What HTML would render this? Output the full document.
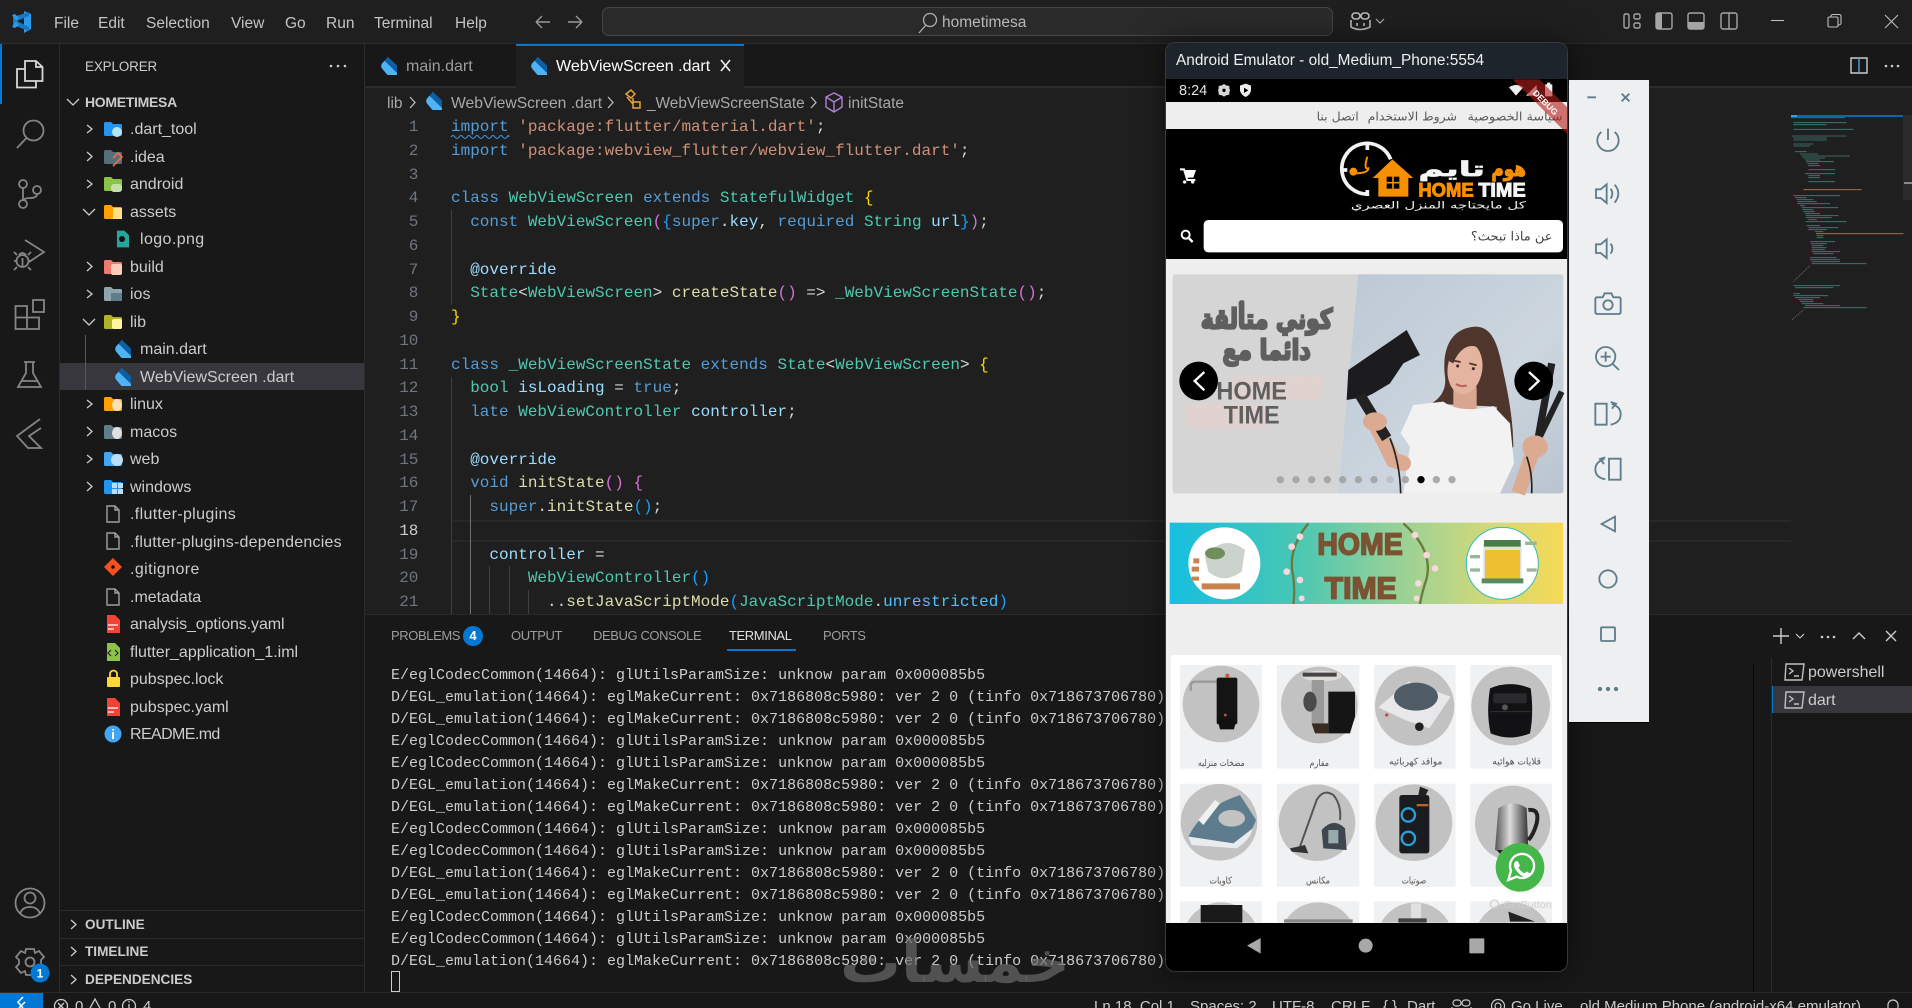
<!DOCTYPE html>
<html lang="en"><head><meta charset="utf-8"><title>hometimesa</title>
<style>
html,body{margin:0;padding:0;width:1912px;height:1008px;overflow:hidden;background:#1f1f1f}
body{position:relative;font-family:"Liberation Sans",sans-serif;color:#ccc}
.b{position:absolute}
.t{position:absolute;white-space:nowrap;height:22px;line-height:22px;font-size:16px}
.m{font-size:15.5px;color:#c4c4c4}
.e{color:#ccc;font-size:16px}
.h{font-weight:bold;font-size:13.6px;color:#ccc}
.p{font-size:13px;color:#9d9d9d;letter-spacing:-.4px}
.code{position:absolute;left:451px;top:116px;width:1340px;height:498px;overflow:hidden;font:16px/23.75px "Liberation Mono",monospace;color:#d4d4d4;white-space:pre}
.ln{position:absolute;left:380px;width:38.4px;top:116px;height:498px;overflow:hidden;font:16px/23.75px "Liberation Mono",monospace;color:#6e7681;text-align:right;white-space:pre}
.term{position:absolute;left:391px;top:665px;font:15px/22px "Liberation Mono",monospace;color:#ccc;white-space:pre}
i{font-style:normal}
.k{color:#569cd6}.c{color:#4ec9b0}.s{color:#ce9178}.f{color:#dcdcaa}.v{color:#9cdcfe}.g{color:#ffd700}.q{color:#da70d6}.u{color:#179fff}
svg{position:absolute;overflow:visible}
svg text{font-family:"DejaVu Sans",sans-serif}
</style></head><body>

<!-- chrome backgrounds -->
<div class="b" style="left:0;top:0;width:1912px;height:43px;background:#1f1f1f;border-bottom:1px solid #2b2b2b"></div>
<div class="b" style="left:0;top:44px;width:60px;height:949px;background:#181818;border-right:1px solid #2b2b2b;box-sizing:border-box"></div>
<div class="b" style="left:60px;top:44px;width:305px;height:949px;background:#181818;border-right:1px solid #2b2b2b;box-sizing:border-box"></div>
<div class="b" style="left:365px;top:44px;width:1547px;height:42px;background:#181818;border-bottom:2px solid #2b2b2b"></div>
<div class="b" style="left:516px;top:44px;width:228px;height:44px;background:#1f1f1f;border-top:2px solid #0078d4;box-sizing:border-box"></div>
<div class="b" style="left:0;top:44px;width:2px;height:60px;background:#0078d4"></div>
<div class="b" style="left:602px;top:7px;width:731px;height:29px;background:#2a2a2a;border:1px solid #454545;border-radius:7px;box-sizing:border-box"></div>
<div class="b" style="left:60px;top:363px;width:304px;height:27px;background:#37373d"></div>
<div class="b" style="left:85px;top:335px;width:1px;height:55px;background:#585858"></div>
<div class="b" style="left:60px;top:910px;width:304px;height:1px;background:#2b2b2b"></div>
<div class="b" style="left:60px;top:938px;width:304px;height:1px;background:#2b2b2b"></div>
<div class="b" style="left:60px;top:965px;width:304px;height:1px;background:#2b2b2b"></div>

<div class="b" style="left:0;top:1px">
<!-- menu -->
<div class="t m" style="left:54px;top:12px">File</div>
<div class="t m" style="left:98px;top:12px">Edit</div>
<div class="t m" style="left:146px;top:12px">Selection</div>
<div class="t m" style="left:231px;top:12px">View</div>
<div class="t m" style="left:285px;top:12px">Go</div>
<div class="t m" style="left:326px;top:12px">Run</div>
<div class="t m" style="left:374px;top:12px">Terminal</div>
<div class="t m" style="left:455px;top:12px">Help</div>
<div class="t" style="left:942px;top:11px;font-size:15.5px;color:#b8b8b8">hometimesa</div>

<!-- explorer text -->
<div class="t" style="left:85px;top:55px;font-size:13.4px;color:#ccc;letter-spacing:-.1px">EXPLORER</div>
<div class="t h" style="left:85px;top:90px;font-size:14px;letter-spacing:-.3px">HOMETIMESA</div>
<div class="t e" style="left:130px;top:118px">.dart_tool</div>
<div class="t e" style="left:130px;top:146px">.idea</div>
<div class="t e" style="left:130px;top:173px">android</div>
<div class="t e" style="left:130px;top:201px">assets</div>
<div class="t e" style="left:140px;top:228px;letter-spacing:.4px">logo.png</div>
<div class="t e" style="left:130px;top:256px">build</div>
<div class="t e" style="left:130px;top:283px">ios</div>
<div class="t e" style="left:130px;top:311px">lib</div>
<div class="t e" style="left:140px;top:338px">main.dart</div>
<div class="t e" style="left:140px;top:366px">WebViewScreen .dart</div>
<div class="t e" style="left:130px;top:393px">linux</div>
<div class="t e" style="left:130px;top:421px">macos</div>
<div class="t e" style="left:130px;top:448px">web</div>
<div class="t e" style="left:130px;top:476px">windows</div>
<div class="t e" style="left:130px;top:503px;letter-spacing:.35px">.flutter-plugins</div>
<div class="t e" style="left:130px;top:531px;letter-spacing:.22px">.flutter-plugins-dependencies</div>
<div class="t e" style="left:130px;top:558px;letter-spacing:.4px">.gitignore</div>
<div class="t e" style="left:130px;top:586px">.metadata</div>
<div class="t e" style="left:130px;top:613px;letter-spacing:-.1px">analysis_options.yaml</div>
<div class="t e" style="left:130px;top:641px">flutter_application_1.iml</div>
<div class="t e" style="left:130px;top:668px">pubspec.lock</div>
<div class="t e" style="left:130px;top:696px">pubspec.yaml</div>
<div class="t e" style="left:130px;top:723px;letter-spacing:-.6px">README.md</div>
<div class="t h" style="left:85px;top:913px">OUTLINE</div>
<div class="t h" style="left:85px;top:940px">TIMELINE</div>
<div class="t h" style="left:85px;top:968px">DEPENDENCIES</div>

<!-- tabs + breadcrumb -->
<div class="t" style="left:406px;top:55px;color:#9d9d9d">main.dart</div>
<div class="t" style="left:556px;top:55px;color:#fff">WebViewScreen .dart</div>
<div class="t" style="left:387px;top:92px;font-size:15.5px;color:#a8a8a8">lib</div>
<div class="t" style="left:451px;top:92px;font-size:15.7px;color:#a8a8a8">WebViewScreen .dart</div>
<div class="t" style="left:647px;top:92px;font-size:15.4px;color:#a8a8a8">_WebViewScreenState</div>
<div class="t" style="left:848px;top:92px;font-size:15.5px;color:#a8a8a8">initState</div>
</div>

<!-- editor -->
<div class="b" style="left:451px;top:520px;width:1340px;height:22px;box-sizing:border-box;border-top:2px solid #282828;border-bottom:2px solid #282828"></div>
<div class="b" style="left:451px;top:210px;width:1px;height:95px;background:#404040"></div>
<div class="b" style="left:451px;top:377px;width:1px;height:237px;background:#404040"></div>
<div class="b" style="left:470px;top:495px;width:1px;height:119px;background:#707070"></div>
<div class="b" style="left:489px;top:566px;width:1px;height:48px;background:#404040"></div>
<div class="b" style="left:509px;top:566px;width:1px;height:48px;background:#404040"></div>
<div class="b" style="left:528px;top:590px;width:1px;height:24px;background:#404040"></div>
<div class="ln">1
2
3
4
5
6
7
8
9
10
11
12
13
14
15
16
17
<i style="color:#ccc">18</i>
19
20
21</div>
<div class="code"><i class="k">import</i> <i class="s">'package:flutter/material.dart'</i>;
<i class="k">import</i> <i class="s">'package:webview_flutter/webview_flutter.dart'</i>;

<i class="k">class</i> <i class="c">WebViewScreen</i> <i class="k">extends</i> <i class="c">StatefulWidget</i> <i class="g">{</i>
  <i class="k">const</i> <i class="c">WebViewScreen</i><i class="q">(</i><i class="u">{</i><i class="k">super</i>.<i class="v">key</i>, <i class="k">required</i> <i class="c">String</i> <i class="v">url</i><i class="u">}</i><i class="q">)</i>;

  <i class="v">@override</i>
  <i class="c">State</i>&lt;<i class="c">WebViewScreen</i>&gt; <i class="f">createState</i><i class="q">()</i> =&gt; <i class="c">_WebViewScreenState</i><i class="q">()</i>;
<i class="g">}</i>

<i class="k">class</i> <i class="c">_WebViewScreenState</i> <i class="k">extends</i> <i class="c">State</i>&lt;<i class="c">WebViewScreen</i>&gt; <i class="g">{</i>
  <i class="c">bool</i> <i class="v">isLoading</i> = <i class="k">true</i>;
  <i class="k">late</i> <i class="c">WebViewController</i> <i class="v">controller</i>;

  <i class="v">@override</i>
  <i class="k">void</i> <i class="f">initState</i><i class="q">()</i> <i class="q">{</i>
    <i class="k">super</i>.<i class="f">initState</i><i class="u">()</i>;

    <i class="v">controller</i> =
        <i class="c">WebViewController</i><i class="u">()</i>
          ..<i class="f">setJavaScriptMode</i><i class="u">(</i><i class="c">JavaScriptMode</i>.<i class="u" style="color:#4fc1ff">unrestricted</i><i class="u">)</i></div>

<!-- panel -->
<div class="b" style="left:365px;top:614px;width:1547px;height:379px;background:#181818;border-top:1px solid #2b2b2b;box-sizing:border-box"></div>
<div class="t p" style="left:391px;top:625px">PROBLEMS</div>
<div class="t p" style="left:511px;top:625px">OUTPUT</div>
<div class="t p" style="left:593px;top:625px">DEBUG CONSOLE</div>
<div class="t p" style="left:729px;top:625px;color:#e0e0e0">TERMINAL</div>
<div class="t p" style="left:823px;top:625px">PORTS</div>
<div class="b" style="left:727px;top:649px;width:69px;height:2px;background:#0078d4"></div>
<div class="b" style="left:463px;top:626px;width:20px;height:20px;border-radius:50%;background:#0078d4;color:#fff;font:bold 13px/20px 'Liberation Sans',sans-serif;text-align:center">4</div>
<div class="term">E/eglCodecCommon(14664): glUtilsParamSize: unknow param 0x000085b5
D/EGL_emulation(14664): eglMakeCurrent: 0x7186808c5980: ver 2 0 (tinfo 0x718673706780)
D/EGL_emulation(14664): eglMakeCurrent: 0x7186808c5980: ver 2 0 (tinfo 0x718673706780)
E/eglCodecCommon(14664): glUtilsParamSize: unknow param 0x000085b5
E/eglCodecCommon(14664): glUtilsParamSize: unknow param 0x000085b5
D/EGL_emulation(14664): eglMakeCurrent: 0x7186808c5980: ver 2 0 (tinfo 0x718673706780)
D/EGL_emulation(14664): eglMakeCurrent: 0x7186808c5980: ver 2 0 (tinfo 0x718673706780)
E/eglCodecCommon(14664): glUtilsParamSize: unknow param 0x000085b5
E/eglCodecCommon(14664): glUtilsParamSize: unknow param 0x000085b5
D/EGL_emulation(14664): eglMakeCurrent: 0x7186808c5980: ver 2 0 (tinfo 0x718673706780)
D/EGL_emulation(14664): eglMakeCurrent: 0x7186808c5980: ver 2 0 (tinfo 0x718673706780)
E/eglCodecCommon(14664): glUtilsParamSize: unknow param 0x000085b5
E/eglCodecCommon(14664): glUtilsParamSize: unknow param 0x000085b5
D/EGL_emulation(14664): eglMakeCurrent: 0x7186808c5980: ver 2 0 (tinfo 0x718673706780)</div>
<div class="b" style="left:391px;top:971px;width:9px;height:21px;border:1px solid #ccc;box-sizing:border-box"></div>
<div class="b" style="left:1753px;top:663px;width:1px;height:330px;background:#050505"></div>
<div class="b" style="left:1771px;top:658px;width:1px;height:335px;background:#2b2b2b"></div>
<div class="b" style="left:1772px;top:686px;width:140px;height:27px;background:#37373d;border-left:1px solid #0078d4;box-sizing:border-box"></div>
<div class="t" style="left:1808px;top:662px;color:#ccc">powershell</div>
<div class="t" style="left:1808px;top:690px;color:#ccc">dart</div>

<!-- minimap -->
<div class="b" style="left:1791px;top:115px;width:112px;height:2px;background:#0a66b0"></div>
<div class="b" style="left:1791px;top:115px;width:6px;height:2px;background:#2aa0f0"></div>
<div class="b" style="left:1903px;top:115px;width:9px;height:85px;background:#2b2b2b"></div>
<div class="b" style="left:1904px;top:182px;width:8px;height:2px;background:#8a8a8a"></div>
<svg style="left:1560px;top:0" width="352" height="400" viewBox="0 0 1056 1200" fill="none" stroke-width="2.6">
<path stroke="#4a9a90" opacity=".8" d="M693 353H855M700 368H860M700 374H800M700 388H880M695 408H860M700 414H800M700 420H800M700 432H760M700 438H750M705 455H740M720 462H775M725 468H870M730 474H795M735 480H780M738 485H822M742 491H775M745 497H780M745 509H825M735 521H825M745 527H780M745 533H780M745 545H825M700 587H840M705 593H740M710 599H760M712 605H770M712 611H810M720 617H735M725 623H835M727 629H760M730 635H765M735 641H780M737 647H835M737 653H815M745 659H770M737 665H860M740 677H780M745 683H835M745 689H800M765 695H790M770 707H790M770 713H790M750 725H825M752 731H800M755 737H790M755 743H800M755 749H795M755 755H840M760 761H820M750 773H830M750 779H840M755 785H840M755 791H920M700 857H840M705 863H820M700 881H720M700 887H805M705 893H780M715 899H760M720 905H760M725 911H790M735 917H840M730 923H920"/>
<path stroke="#b8794f" d="M730 569H905M768 701H1030"/>
<path stroke="#777" stroke-dasharray="3 3" d="M750 797L700 845M730 930L695 960"/>
</svg>

<!-- status bar -->
<div class="b" style="left:0;top:992px;width:1912px;height:16px;background:#181818;border-top:1px solid #2b2b2b;box-sizing:border-box;overflow:hidden"></div>
<div class="b" style="left:0;top:993px;width:43px;height:15px;background:#0078d4"></div>
<div class="t" style="left:75px;top:996px;font-size:15px">0</div>
<div class="t" style="left:108px;top:996px;font-size:15px">0</div>
<div class="t" style="left:143px;top:996px;font-size:15px">4</div>
<div class="t" style="left:1094px;top:996px;font-size:15px">Ln 18, Col 1</div>
<div class="t" style="left:1190px;top:996px;font-size:15px">Spaces: 2</div>
<div class="t" style="left:1272px;top:996px;font-size:15px">UTF-8</div>
<div class="t" style="left:1331px;top:996px;font-size:15px">CRLF</div>
<div class="t" style="left:1383px;top:996px;font-size:15px">{ }</div>
<div class="t" style="left:1407px;top:996px;font-size:15px">Dart</div>
<div class="t" style="left:1511px;top:996px;font-size:15px">Go Live</div>
<div class="t" style="left:1580px;top:996px;font-size:15px">old Medium Phone (android-x64 emulator)</div>

<!-- watermark -->
<svg style="left:0;top:0" width="1912" height="1008"><text x="955" y="982" text-anchor="middle" font-size="58" font-weight="bold" fill="#6a6a6a" fill-opacity=".7" textLength="230" lengthAdjust="spacingAndGlyphs">خمسات</text></svg>

<!-- vscode icons -->
<svg style="left:0;top:0" width="1912" height="1008" fill="none">
<defs>
<symbol id="dart" viewBox="0 0 17 18"><path fill="#4fb3f6" d="M7 0L1 6.5Q-.6 9 1 11.5L6.5 18H16V12Z"/><path fill="#0d5fa3" d="M7 0L16 8.5V16L3.5 3.7Z"/></symbol>
<symbol id="fo" viewBox="0 0 18 14"><path fill="currentColor" d="M0 1.5A1.5 1.5 0 0 1 1.5 0H7l2 2h7.5A1.5 1.5 0 0 1 18 3.5V12.5A1.5 1.5 0 0 1 16.5 14H1.5A1.5 1.5 0 0 1 0 12.5Z"/></symbol>
<symbol id="fl" viewBox="0 0 14 18"><path stroke="#a0a0a0" stroke-width="1.4" fill="none" d="M1 1H9L13 5V17H1ZM9 1V5H13"/></symbol>
<symbol id="ff" viewBox="0 0 14 18"><path fill="currentColor" d="M1 0H9L14 5V18H1Z"/></symbol>
</defs>
<!-- vscode logo -->
<path fill="#2a9be8" d="M24 11L31 14V29L24 33Z"/><path fill="#1a78c2" d="M13 17L29 12V16L17 21L29 27V31L13 25Z"/><path fill="#2a9be8" d="M12 15L15 14L19 18L16 21L19 25L15 28L12 27L16 21Z"/>
<!-- nav arrows -->
<g stroke="#9a9a9a" stroke-width="1.4"><path d="M536 22H550M536 22L542 16M536 22L542 28"/><path d="M582 22H568M582 22L576 16M582 22L576 28"/></g>
<circle cx="930" cy="20" r="6.5" stroke="#b0b0b0" stroke-width="1.3"/><path d="M926 25L919 33" stroke="#b0b0b0" stroke-width="1.3"/>
<!-- copilot -->
<g stroke="#bbb" stroke-width="1.6"><rect x="1352" y="13" width="8" height="6" rx="3"/><rect x="1361" y="13" width="8" height="6" rx="3"/><path d="M1351 20V27Q1360 32 1370 27V20"/><path d="M1357 23V26M1364 23V26"/></g>
<path d="M1376 19L1380 23L1384 19" stroke="#aaa" stroke-width="1.2"/>
<!-- layout icons -->
<g stroke="#a5a5a5" stroke-width="1.4"><rect x="1624" y="14" width="5" height="14" rx="1.5"/><rect x="1634" y="14" width="6" height="5" rx="1.5"/><rect x="1634" y="23" width="6" height="5" rx="1.5"/><rect x="1656" y="13" width="16" height="16" rx="2"/><rect x="1688" y="13" width="16" height="16" rx="2"/><rect x="1721" y="13" width="16" height="16" rx="2"/><path d="M1729 13V29"/></g>
<path fill="#a5a5a5" d="M1656 15Q1656 13 1658 13H1662V29H1658Q1656 29 1656 27Z"/><path fill="#a5a5a5" d="M1688 22H1704V27Q1704 29 1702 29H1690Q1688 29 1688 27Z"/>
<g stroke="#bdbdbd" stroke-width="1.1"><path d="M1771 20.5H1784"/><rect x="1828" y="17" width="10" height="10" rx="1.5"/><path d="M1831 17V16Q1831 14.500 1833 14.500H1839Q1841 14.500 1841 16V23Q1841 25 1838 25"/><path d="M1885 15L1898 28M1898 15L1885 28"/></g>
<!-- tab icons -->
<use href="#dart" x="381" y="57" width="17" height="18"/><use href="#dart" x="531" y="57" width="17" height="18"/><use href="#dart" x="426" y="92" width="17" height="18"/>
<path d="M721 60L730 71M730 60L721 71" stroke="#eee" stroke-width="1.6"/>
<g stroke="#bbb" stroke-width="1.3"><path d="M410 97L415 102.500L410 108M608 97L613 102.500L608 108M811 97L816 102.500L811 108"/></g>
<g stroke="#e8a33b" stroke-width="1.5"><path d="M626 94L631 90L635 94L631 98ZM633 102H640V108H633ZM633 98V105M627 97L633 104"/></g>
<g stroke="#b180d7" stroke-width="1.4"><path d="M834 93L842 97V107L834 112L826 107V97ZM826 97L834 102L842 97M834 102V112"/></g>
<path d="M1851 58H1867V73H1851Z" stroke="#ccc" stroke-width="1.4"/><path d="M1859 58V73" stroke="#4fa6e0" stroke-width="1.4"/>
<g fill="#ccc"><circle cx="1886" cy="66" r="1.3"/><circle cx="1892" cy="66" r="1.3"/><circle cx="1898" cy="66" r="1.3"/><circle cx="331" cy="66" r="1.3"/><circle cx="338" cy="66" r="1.3"/><circle cx="345" cy="66" r="1.3"/></g>
<!-- squiggle -->
<path d="M451 137q2 -3 4 0t4 0t4 0t4 0t4 0t4 0t4 0t4 0t4 0t4 0t4 0t4 0t4 0t4 0t2 0" stroke="#3f9ae8" stroke-width="1"/>
<!-- activity bar -->
<g stroke="#d7d7d7" stroke-width="1.8"><path d="M25 61H36L42.500 67V81H25ZM36 61V67H42.500"/><path d="M25 69H17V87.500H36V81"/></g>
<g stroke="#858585" stroke-width="1.8">
<circle cx="33.500" cy="130.500" r="10"/><path d="M26.500 138L17 148"/>
<circle cx="23" cy="184" r="4"/><circle cx="23" cy="204" r="4"/><circle cx="37" cy="190" r="4"/><path d="M23 188V200M37 194Q37 198 30 198Q24 198 23 201"/>
<path d="M25 240L44 252L29 262"/><circle cx="22.500" cy="261" r="6"/><path d="M16 261H14M29 261H31M17 255L14 252M28 255L31 252M17 267L14 270M28 267L31 270M19 255Q22 251 26 255M22.500 258V266"/>
<path d="M15.500 306H27V329H15.500ZM15.500 317.500H39V329H27M33 300H44V312H33Z"/>
<path d="M24 362H35M26 362V373L18 387H41L33 373V362M21 381H38"/>
<path d="M40 419L17 436L28 448H41L29 436L41 428" />
<circle cx="30" cy="903" r="14.500"/><circle cx="30" cy="898" r="5.500"/><path d="M20 914Q22 907 30 907Q38 907 40 914"/>
<circle cx="30" cy="962" r="4.500"/><path d="M26 949H34L35 953L39 951L44 957L41 960V964L44 967L39 973L35 971L34 975H26L25 971L21 973L16 967L19 964V960L16 957L21 951L25 953Z"/>
</g>
<circle cx="40" cy="973" r="9.500" fill="#0078d4"/><text x="40" y="977.500" text-anchor="middle" font-size="12" font-weight="bold" fill="#fff" style="font-family:'Liberation Sans',sans-serif">1</text>
<!-- explorer chevrons -->
<g stroke="#ccc" stroke-width="1.3">
<path d="M87 125L92 129L87 133M87 152L92 156.500L87 161M87 180L92 184L87 188M87 262L92 266.500L87 271M87 290L92 294L87 298M87 400L92 404L87 408M87 427L92 431.500L87 436M87 455L92 459L87 463M87 482L92 486.500L87 491"/>
<path d="M83 209L89 215L95 209M83 319L89 325L95 319M67 99L73 105L79 99"/>
<path d="M71 920L76 924.500L71 929M71 947L76 951.500L71 956M71 975L76 979.500L71 984"/>
</g>
<!-- folders -->
<use href="#fo" x="104" y="122" width="18" height="14" color="#2196f3"/><circle cx="117" cy="132" r="5" fill="#b3e5fc"/>
<use href="#fo" x="104" y="150" width="18" height="14" color="#546e7a"/><path d="M113 158L118 153L122 157L113 166" stroke="#ef6c4a" stroke-width="1.6"/>
<use href="#fo" x="104" y="177" width="18" height="14" color="#8bc34a"/><rect x="111" y="184" width="11" height="8" rx="3" fill="#c5e1a5"/>
<use href="#fo" x="104" y="205" width="18" height="14" color="#ffa000"/><rect x="113" y="208" width="9" height="11" fill="#ffe082"/>
<use href="#ff" x="116" y="230" width="13" height="18" color="#26a69a"/><circle cx="122" cy="239" r="3" fill="#111"/>
<use href="#fo" x="104" y="260" width="18" height="14" color="#ef7b6f"/><rect x="111" y="264" width="11" height="11" rx="2" fill="#ffccbc"/>
<use href="#fo" x="104" y="287" width="18" height="14" color="#90a4ae"/><rect x="111" y="293" width="11" height="8" fill="#607d8b"/>
<use href="#fo" x="104" y="315" width="18" height="14" color="#afb42b"/><rect x="112" y="319" width="10" height="10" rx="2" fill="#fff59d"/>
<use href="#fo" x="104" y="397" width="18" height="14" color="#ffa000"/><ellipse cx="117" cy="405" rx="5" ry="6" fill="#ffe0b2"/>
<use href="#fo" x="104" y="425" width="18" height="14" color="#607d8b"/><ellipse cx="117" cy="433" rx="5" ry="6" fill="#e0e0e0"/>
<use href="#fo" x="104" y="452" width="18" height="14" color="#42a5f5"/><circle cx="117" cy="460" r="6" fill="#bbdefb"/>
<use href="#fo" x="104" y="480" width="18" height="14" color="#2196f3"/><path fill="#bbdefb" d="M112 483H117V488H112ZM118 483H123V488H118ZM112 489H117V494H112ZM118 489H123V494H118Z"/>
<use href="#dart" x="115" y="340" width="17" height="18"/><use href="#dart" x="115" y="368" width="17" height="18"/>
<use href="#fl" x="106" y="505" width="14" height="18"/><use href="#fl" x="106" y="532" width="14" height="18"/><use href="#fl" x="106" y="588" width="14" height="18"/>
<path fill="#f4511e" d="M113 558L122 567L113 576L104 567Z"/><circle cx="113" cy="567" r="1.700" fill="#111"/>
<use href="#ff" x="106" y="615" width="14" height="18" color="#f44336"/><path d="M108 625H118M108 629H114" stroke="#fff" stroke-width="1.300"/>
<use href="#ff" x="106" y="643" width="14" height="18" color="#8bc34a"/><path d="M111 650L108 653L111 656M115 650L118 653L115 656" stroke="#222" stroke-width="1.200"/>
<rect x="107" y="677" width="13" height="10" rx="1" fill="#fdd835"/><path d="M110 677V674A3.500 3.500 0 0 1 117 674V677" stroke="#fdd835" stroke-width="1.800"/>
<use href="#ff" x="106" y="698" width="14" height="18" color="#f44336"/><path d="M108 708H118M108 712H114" stroke="#fff" stroke-width="1.300"/>
<circle cx="113" cy="734" r="8.500" fill="#42a5f5"/><path d="M113 732V739M113 729V730.500" stroke="#fff" stroke-width="2"/>
<!-- panel right -->
<g stroke="#ccc" stroke-width="1.4"><path d="M1781 628V644M1773 636H1789"/><path d="M1796 634L1800 638L1804 634" stroke-width="1.100"/><path d="M1853 639L1859 633L1865 639"/><path d="M1886 631L1896 641M1896 631L1886 641"/></g>
<g fill="#ccc"><circle cx="1822" cy="637" r="1.300"/><circle cx="1828" cy="637" r="1.300"/><circle cx="1834" cy="637" r="1.300"/></g>
<g stroke="#c0c0c0" stroke-width="1.400"><path d="M1786 664H1804L1802 680H1785ZM1789 668L1793 671L1789 674M1794 676H1799"/><path d="M1786 692H1804L1802 708H1785ZM1789 696L1793 699L1789 702M1794 704H1799"/></g>
<!-- status icons -->
<path d="M16 1003L22 998M22 1003L16 998M20 1006L26 1001M26 1006L20 1001" stroke="#fff" stroke-width="1.500" opacity="0"/>
<path d="M21 1008L26 1002L21 997" stroke="#fff" stroke-width="1.500" transform="matrix(-1 0 0 1 44 0)"/><path d="M19 1008L25 1002" stroke="#fff" stroke-width="1.500"/>
<g stroke="#ccc" stroke-width="1.300"><circle cx="61" cy="1006" r="6.500"/><path d="M58 1003L64 1009M64 1003L58 1009"/><path d="M95 999L102 1012H88Z"/><circle cx="129" cy="1006" r="6.500"/><path d="M129 1004V1010M129 1001V1002.500"/></g>
<g stroke="#ccc" stroke-width="1.200"><rect x="1453" y="1000" width="8" height="6" rx="3"/><rect x="1462" y="1000" width="8" height="6" rx="3"/><path d="M1452 1007V1012M1471 1007V1012"/><circle cx="1498" cy="1006" r="6.500"/><circle cx="1498" cy="1006" r="3"/><path d="M1888 1012V1005A5 5 0 0 1 1898 1005V1012"/></g>
</svg>

<!-- emulator window -->
<div class="b" style="left:1165px;top:42px;width:403px;height:930px;background:#000;border:1px solid #3a3a3a;border-radius:10px;box-sizing:border-box;box-shadow:0 0 30px rgba(0,0,0,.55);overflow:hidden">
 <div class="b" style="left:0;top:0;width:401px;height:36px;background:#1d242c"></div>
 <div class="b" style="left:0;top:59px;width:401px;height:27px;background:#eeeeee"></div>
 <div class="b" style="left:0;top:216px;width:401px;height:664px;background:#eeeeee"></div>
</div>
<div class="t" style="left:1176px;top:50px;font-size:15.4px;color:#efefef">Android Emulator - old_Medium_Phone:5554</div>
<div class="t" style="left:1179px;top:80px;font-size:14.5px;color:#e2e2e2">8:24</div>
<!-- toolbar -->
<div class="b" style="left:1569px;top:80px;width:80px;height:643px;background:#eeeff0;border-bottom:1px solid #000;box-sizing:border-box"></div>

<!-- phone upper (zoom coordinates 3x) -->
<svg style="left:1160px;top:30px" width="500" height="470" viewBox="0 0 1500 1410" fill="none">
<defs>
<linearGradient id="gb" x1="0" y1="0" x2="1" y2="1"><stop offset="0" stop-color="#bcc8d4"/><stop offset=".6" stop-color="#cdd6df"/><stop offset="1" stop-color="#b9c4cf"/></linearGradient>
</defs>
<!-- status icons -->
<path fill="#eee" d="M192 162L198 166L208 168V175L210 181L208 187V194L198 196L192 200L186 196L176 194V187L174 181L176 175V168L186 166Z" opacity=".9"/><circle cx="192" cy="181" r="5" fill="#000"/>
<path fill="#eee" d="M240 167L257 161L273 167V182Q270 195 257 201Q243 195 240 182Z"/><path fill="#000" d="M252 173L265 181L252 189Z"/>
<path fill="#eee" d="M1047 172Q1068 158 1090 172L1068 197Z"/><path fill="#eee" d="M1098 197L1130 165V197Z"/><rect x="1155" y="163" width="22" height="36" rx="2" fill="#eee"/><rect x="1161" y="158" width="10" height="6" fill="#eee"/>
<!-- menu row -->
<text x="1065" y="272" text-anchor="middle" font-size="36" fill="#5a5a5a" textLength="285" lengthAdjust="spacingAndGlyphs">سياسة الخصوصية</text>
<text x="757" y="272" text-anchor="middle" font-size="36" fill="#5a5a5a" textLength="268" lengthAdjust="spacingAndGlyphs">شروط الاستخدام</text>
<text x="533" y="272" text-anchor="middle" font-size="36" fill="#5a5a5a" textLength="126" lengthAdjust="spacingAndGlyphs">اتصل بنا</text>
<!-- logo -->
<g stroke="#f2f2f2" stroke-width="11"><path d="M625 492A76 76 0 1 1 692 388"/><path d="M622 345V360M548 420H562M622 480V498"/></g>
<path d="M622 380Q610 420 625 415Q625 428 590 430" stroke="#f79000" stroke-width="6"/><circle cx="580" cy="425" r="12" fill="#f79000"/>
<path fill="#f79000" d="M697 388L760 444H745V500H655V444H638Z"/><path fill="#000" d="M680 440H718V476H680Z"/><path d="M699 440V476M680 458H718" stroke="#f79000" stroke-width="5"/>
<text x="1046" y="438" text-anchor="middle" font-size="62" font-weight="bold" fill="#f79000" stroke="#f79000" stroke-width="3" textLength="104" lengthAdjust="spacingAndGlyphs">هوم</text>
<text x="875" y="438" text-anchor="middle" font-size="62" font-weight="bold" fill="#f4f4f4" stroke="#f4f4f4" stroke-width="2" textLength="200" lengthAdjust="spacingAndGlyphs">تايم</text>
<text x="775" y="500" font-size="58" font-weight="bold" fill="#f79000" stroke="#f79000" stroke-width="3" textLength="166" lengthAdjust="spacingAndGlyphs" style="font-family:'Liberation Sans',sans-serif">HOME</text>
<text x="955" y="500" font-size="58" font-weight="bold" fill="#f4f4f4" stroke="#f4f4f4" stroke-width="3" textLength="142" lengthAdjust="spacingAndGlyphs" style="font-family:'Liberation Sans',sans-serif">TIME</text>
<text x="835" y="536" text-anchor="middle" font-size="30" fill="#eee" textLength="525" lengthAdjust="spacingAndGlyphs">كل مايحتاجه المنزل العصري</text>
<!-- cart -->
<path d="M60 418H72L82 450H106" stroke="#fff" stroke-width="6"/><path fill="#fff" d="M72 420H108L100 443H80Z"/><circle cx="74" cy="456" r="5" fill="#fff"/><circle cx="98" cy="456" r="5" fill="#fff"/>
<!-- search -->
<circle cx="77" cy="614" r="12" stroke="#fff" stroke-width="6"/><path d="M86 624L98 636" stroke="#fff" stroke-width="7"/>
<rect x="131" y="570" width="1078" height="97" rx="14" fill="#fff"/>
<text x="1055" y="632" text-anchor="middle" font-size="38" fill="#444" textLength="245" lengthAdjust="spacingAndGlyphs">عن ماذا تبحث؟</text>
<!-- carousel -->
<rect x="38" y="733" width="1172" height="657" rx="8" fill="#d5d5d5"/>
<path fill="url(#gb)" d="M595 733H1202Q1210 733 1210 741V1382Q1210 1390 1202 1390H535Z"/>
<path fill="#e0d3cf" d="M215 1040L498 1038L480 1110L215 1110ZM75 1120L320 1122L320 1195L80 1195Z"/>
<text x="320" y="895" text-anchor="middle" font-size="82" font-weight="bold" fill="#5f5f5f" stroke="#5f5f5f" stroke-width="7" textLength="395" lengthAdjust="spacingAndGlyphs">كوني متألقة</text>
<text x="320" y="988" text-anchor="middle" font-size="82" font-weight="bold" fill="#5f5f5f" stroke="#5f5f5f" stroke-width="7" textLength="265" lengthAdjust="spacingAndGlyphs">دائما مع</text>
<text x="275" y="1108" text-anchor="middle" font-size="74" font-weight="bold" fill="#5f5f5f" textLength="212" lengthAdjust="spacingAndGlyphs" style="font-family:'Liberation Sans',sans-serif">HOME</text>
<text x="275" y="1181" text-anchor="middle" font-size="74" font-weight="bold" fill="#5f5f5f" textLength="168" lengthAdjust="spacingAndGlyphs" style="font-family:'Liberation Sans',sans-serif">TIME</text>
<!-- woman -->
<path fill="#4e362d" d="M945 890C870 895 845 960 855 1040C860 1080 840 1105 815 1120L900 1125L1010 1130L1020 1300L1060 1250C1060 1150 1035 1050 1020 980C1005 920 985 890 945 890Z"/>
<path fill="#d8a58f" d="M880 1070H950V1140H880Z"/>
<ellipse cx="915" cy="1015" rx="52" ry="78" fill="#e4b4a0" transform="rotate(8 915 1015)"/>
<path fill="#4e362d" d="M950 895C900 900 870 930 860 990L880 1000C900 950 935 935 965 960Z"/>
<path fill="#4e362d" d="M965 950L1000 1010L990 1130L1030 1130L1020 980Z"/>
<path d="M882 992L902 996M928 1000L950 1006" stroke="#4a3026" stroke-width="5"/><circle cx="893" cy="1008" r="4.500" fill="#3a2a22"/><circle cx="940" cy="1016" r="4.500" fill="#3a2a22"/><path d="M888 1062Q905 1072 920 1066" stroke="#b8615a" stroke-width="6"/>
<path fill="#f2f2f2" d="M760 1125L850 1115C890 1145 950 1140 1000 1128L1050 1180L1062 1300L1020 1390H730L750 1250L722 1210Z"/>
<path d="M640 1170L700 1290L730 1300" stroke="#dcaa90" stroke-width="46" stroke-linecap="round"/>
<path d="M1120 1260L1075 1390" stroke="#dcaa90" stroke-width="42"/>
<path fill="#1c1c1e" d="M565 1020L740 900L780 975L730 1000L690 1060L640 1090L620 1100L560 1110Z"/>
<path d="M600 1095L680 1225" stroke="#222" stroke-width="32"/>
<path d="M690 1225Q720 1300 722 1390" stroke="#222" stroke-width="5"/>
<ellipse cx="645" cy="1175" rx="36" ry="28" fill="#dcaa90"/>
<path d="M1175 1000L1130 1250" stroke="#222" stroke-width="22"/><path d="M1205 1085L1130 1240" stroke="#222" stroke-width="18"/>
<ellipse cx="1125" cy="1250" rx="38" ry="34" fill="#dcaa90"/>
<path d="M1100 1280Q1118 1330 1115 1390" stroke="#222" stroke-width="5"/>
<!-- dots -->
<g fill="#a2a2a2" fill-opacity=".9"><circle cx="361" cy="1349" r="11"/><circle cx="408" cy="1349" r="11"/><circle cx="455" cy="1349" r="11"/><circle cx="502" cy="1349" r="11"/><circle cx="548" cy="1349" r="11"/><circle cx="595" cy="1349" r="11"/><circle cx="642" cy="1349" r="11"/><circle cx="690" cy="1349" r="11" fill-opacity=".4"/><circle cx="736" cy="1349" r="11"/><circle cx="829" cy="1349" r="11"/><circle cx="876" cy="1349" r="11"/></g>
<circle cx="783" cy="1349" r="11" fill="#000"/>
<circle cx="116" cy="1053" r="58" fill="#000"/><circle cx="1121" cy="1053" r="58" fill="#000"/>
<path d="M133 1026L104 1053L133 1081M1107 1026L1136 1053L1107 1081" stroke="#fff" stroke-width="7"/>
<!-- debug ribbon -->
<path fill="rgba(183,28,28,.6)" d="M1058 148H1138L1222 232V312Z"/>
<text x="1150" y="224" text-anchor="middle" font-size="26" font-weight="bold" fill="#fff" transform="rotate(45 1150 224)" style="font-family:'Liberation Sans',sans-serif">DEBUG</text>
<!-- toolbar icons -->
<g stroke="#5f7d8c" stroke-width="5.500">
<path d="M1282 202H1308M1385 191L1408 214M1408 191L1385 214"/>
<path d="M1324 306A32 32 0 1 0 1364 306M1344 296V330"/>
<path d="M1308 478H1322L1340 463V519L1322 504H1308ZM1352 476Q1362 490 1352 506M1364 464Q1386 490 1364 518"/>
<path d="M1308 643H1322L1340 628V684L1322 669H1308ZM1352 641Q1362 655 1352 671"/>
<path d="M1306 808Q1306 802 1312 802H1328L1334 790H1354L1360 802H1376Q1382 802 1382 808V846Q1382 852 1376 852H1312Q1306 852 1306 846Z"/><circle cx="1344" cy="825" r="14"/>
<circle cx="1337" cy="980" r="29"/><path d="M1357 1001L1377 1020M1337 965V995M1322 980H1352"/>
<path d="M1306 1121H1340V1184H1306ZM1355 1122Q1382 1130 1382 1152Q1382 1178 1352 1184M1352 1116L1368 1121L1356 1136"/>
<path d="M1347 1286H1382V1349H1347ZM1333 1287Q1306 1296 1306 1318Q1306 1342 1336 1348M1336 1282L1320 1287L1332 1302"/>
</g>
</svg>

<!-- phone lower -->
<svg style="left:1160px;top:500px" width="500" height="508" viewBox="0 0 1500 1524" fill="none">
<defs>
<linearGradient id="bn"><stop offset="0" stop-color="#17bfe0"/><stop offset=".3" stop-color="#44c6b6"/><stop offset=".55" stop-color="#8fd09a"/><stop offset=".8" stop-color="#cfd87c"/><stop offset="1" stop-color="#f6d955"/></linearGradient>
<linearGradient id="ke"><stop offset="0" stop-color="#555"/><stop offset=".45" stop-color="#ddd"/><stop offset="1" stop-color="#333"/></linearGradient>
<clipPath id="cr"><rect x="0" y="0" width="1500" height="1268"/></clipPath>
</defs>
<rect x="29" y="68" width="1180" height="244" fill="url(#bn)"/>
<circle cx="193" cy="190" r="108" fill="#fff"/><circle cx="1027" cy="190" r="108" fill="#fff" stroke="#3bb" stroke-width="3"/>
<path d="M135 170Q190 100 255 150L245 215Q190 255 145 215Z" fill="#ccd3cc"/><ellipse cx="165" cy="160" rx="30" ry="18" fill="#6f8f5a"/>
<path d="M100 175h18v15h-18zM95 200h22v15h-22zM95 230h22v12h-22zM125 250h115v18h-115z" fill="#c9824c"/>
<path d="M970 130H1085V245H970Z" fill="#dfe4dd"/><path d="M972 120H1082V140H972Z" fill="#4b7a4b"/><path d="M975 150H1080V235H975Z" fill="#eec030"/><path d="M965 235H1090V250H965Z" fill="#5a8a5a"/>
<path d="M930 170h30M930 210h30M1095 130h35M1100 210h30" stroke="#9bb59b" stroke-width="10"/>
<path d="M445 70Q380 150 400 230Q405 280 400 312M730 70Q820 150 800 235Q785 280 780 312" stroke="#6a7b3f" stroke-width="7"/>
<g fill="#fbd6da"><circle cx="420" cy="110" r="10"/><circle cx="395" cy="140" r="10"/><circle cx="380" cy="215" r="10"/><circle cx="420" cy="240" r="10"/><circle cx="425" cy="295" r="9"/><circle cx="765" cy="105" r="10"/><circle cx="800" cy="165" r="10"/><circle cx="825" cy="205" r="10"/><circle cx="775" cy="250" r="10"/><circle cx="770" cy="295" r="9"/></g>
<text x="600" y="163" text-anchor="middle" font-size="92" font-weight="bold" fill="#7b5232" stroke="#7b5232" stroke-width="5" textLength="256" lengthAdjust="spacingAndGlyphs" style="font-family:'Liberation Sans',sans-serif">HOME</text>
<text x="602" y="296" text-anchor="middle" font-size="92" font-weight="bold" fill="#7b5232" stroke="#7b5232" stroke-width="5" textLength="216" lengthAdjust="spacingAndGlyphs" style="font-family:'Liberation Sans',sans-serif">TIME</text>
<!-- card -->
<g clip-path="url(#cr)">
<rect x="32" y="465" width="1174" height="810" rx="10" fill="#fff"/>
<g fill="#f0f1f3"><rect x="60" y="495" width="246" height="311"/><rect x="351" y="495" width="247" height="311"/><rect x="642" y="495" width="245" height="311"/><rect x="931" y="495" width="245" height="311"/><rect x="60" y="851" width="246" height="309"/><rect x="351" y="851" width="247" height="309"/><rect x="642" y="851" width="245" height="309"/><rect x="931" y="851" width="245" height="309"/><rect x="60" y="1204" width="246" height="80"/><rect x="351" y="1204" width="247" height="80"/><rect x="642" y="1204" width="245" height="80"/><rect x="931" y="1204" width="245" height="80"/></g>
<g fill="#c2c2c2"><circle cx="183" cy="612" r="115"/><circle cx="478" cy="615" r="115"/><circle cx="764" cy="618" r="119"/><circle cx="1052" cy="618" r="118"/><circle cx="177" cy="967" r="115"/><circle cx="471" cy="968" r="115"/><circle cx="762" cy="968" r="115"/><circle cx="1058" cy="970" r="113"/><circle cx="183" cy="1322" r="115"/><circle cx="475" cy="1322" r="115"/><circle cx="765" cy="1322" r="115"/><circle cx="1058" cy="1322" r="115"/></g>
<!-- pump -->
<path d="M170 545H105Q92 545 92 560V572" stroke="#999" stroke-width="7"/><rect x="170" y="533" width="62" height="140" rx="6" fill="#141414"/><path d="M172 655H230L222 688H180Z" fill="#111"/><circle cx="202" cy="527" r="6" fill="#c65a3a"/><circle cx="196" cy="645" r="4" fill="#c54"/>
<!-- grinder -->
<ellipse cx="485" cy="528" rx="60" ry="16" fill="#dfdcd8"/><path d="M428 518H530V530H428Z" fill="#444"/><path d="M455 540H492V670H455Z" fill="#9a9a9a"/><ellipse cx="450" cy="605" rx="20" ry="30" fill="#4a4a4a"/><path d="M505 575H585V650L570 700H505Z" fill="#151515"/><path d="M455 670H505V700H465Z" fill="#3a2a20"/>
<!-- hotplate -->
<path fill="#e8e8ea" d="M655 622L745 545L872 590L808 685L735 660Z"/><ellipse cx="768" cy="590" rx="66" ry="42" fill="#4f5c66"/><circle cx="778" cy="680" r="13" fill="#222"/><circle cx="680" cy="645" r="5" fill="#c44"/>
<!-- fryer -->
<path fill="#121214" d="M990 565Q1050 540 1112 565Q1122 640 1110 700Q1050 725 992 700Q978 640 990 565Z"/><rect x="1000" y="580" width="100" height="30" rx="6" fill="#2a2a2c"/><circle cx="1035" cy="622" r="9" fill="#555"/><path d="M992 635H1112" stroke="#333" stroke-width="3"/>
<!-- iron -->
<path fill="#5d7d8f" d="M85 1010Q130 920 240 885L288 960Q270 1015 220 1030Z"/><path fill="#e9ecee" d="M85 1010L220 1030L278 985Q270 1020 230 1045L95 1035Z"/><path fill="#f0f0f0" d="M115 960L165 900L180 910L130 975Z"/><ellipse cx="215" cy="955" rx="40" ry="25" fill="#c2c2c2"/>
<!-- vacuum -->
<path d="M420 1040L470 900Q490 865 520 885Q545 915 540 960" stroke="#555" stroke-width="6"/><path fill="#3e4650" d="M485 990Q520 950 555 985L560 1050L490 1045Z"/><path fill="#9aa" d="M505 990H535V1030H505Z"/><path fill="#333" d="M390 1045L435 1035L445 1060L395 1055Z"/>
<!-- speaker -->
<rect x="718" y="885" width="90" height="175" rx="8" fill="#1a1c20"/><circle cx="745" cy="945" r="20" stroke="#2a9fd8" stroke-width="7"/><circle cx="745" cy="1015" r="20" stroke="#2a9fd8" stroke-width="7"/><path d="M780 860L805 870L795 890L775 885Z" fill="#222"/><rect x="770" y="912" width="35" height="7" fill="#b8652a"/>
<!-- kettle -->
<path fill="url(#ke)" d="M1015 925Q1060 895 1100 925L1105 1050Q1060 1070 1005 1050Z"/><path d="M1105 930Q1140 925 1130 970Q1120 1005 1105 1020" stroke="#222" stroke-width="12"/><path fill="#222" d="M1010 1050H1105V1062H1020Z"/>
<!-- row 3 tops -->
<rect x="122" y="1215" width="125" height="60" fill="#1a1a1a"/><rect x="372" y="1258" width="206" height="15" fill="#888"/><rect x="753" y="1210" width="30" height="50" fill="#e0e0e0"/><rect x="715" y="1255" width="85" height="15" fill="#444"/><path d="M1045 1235L1125 1265H1050Z" fill="#222"/>
</g>
<!-- labels -->
<g font-size="28" fill="#555" text-anchor="middle">
<text x="184" y="798" textLength="140" lengthAdjust="spacingAndGlyphs">مضخات منزليه</text>
<text x="478" y="798" textLength="58" lengthAdjust="spacingAndGlyphs">مفارم</text>
<text x="767" y="794" textLength="160" lengthAdjust="spacingAndGlyphs">مواقد كهربائيه</text>
<text x="1070" y="794" textLength="146" lengthAdjust="spacingAndGlyphs">قلايات هوائيه</text>
<text x="182" y="1150" textLength="68" lengthAdjust="spacingAndGlyphs">كاويات</text>
<text x="474" y="1150" textLength="72" lengthAdjust="spacingAndGlyphs">مكانس</text>
<text x="762" y="1150" textLength="74" lengthAdjust="spacingAndGlyphs">صوتيات</text>
</g>
<!-- getbutton + whatsapp -->
<text x="1030" y="1224" font-size="30" fill="#cfcfcf" textLength="145" lengthAdjust="spacingAndGlyphs" style="font-family:'Liberation Sans',sans-serif">GetButton</text>
<circle cx="1003" cy="1212" r="12" stroke="#d0d0d0" stroke-width="4"/>
<circle cx="1080" cy="1102" r="73" fill="#45b649"/>
<path d="M1045 1140L1053 1112A36 36 0 1 1 1070 1130Z" stroke="#fff" stroke-width="7"/>
<path fill="#fff" d="M1065 1085L1073 1083L1080 1097L1075 1103Q1082 1115 1094 1120L1100 1114L1112 1122L1108 1131Q1095 1136 1078 1122Q1060 1105 1062 1092Z"/>
<!-- nav bar -->
<path fill="#a8a8a8" d="M302 1314V1361L261 1337Z"/><circle cx="617" cy="1337" r="21" fill="#a8a8a8"/><rect x="928" y="1315" width="45" height="45" rx="3" fill="#a8a8a8"/>
<!-- toolbar lower -->
<g stroke="#5f7d8c" stroke-width="5.500"><path d="M1365 50V94L1325 72Z"/><circle cx="1344" cy="237" r="26"/><rect x="1323" y="382" width="42" height="41" rx="3"/></g>
<g fill="#5f7d8c"><circle cx="1320" cy="567" r="6.500"/><circle cx="1344" cy="567" r="6.500"/><circle cx="1368" cy="567" r="6.500"/></g>
</svg>
</body></html>
